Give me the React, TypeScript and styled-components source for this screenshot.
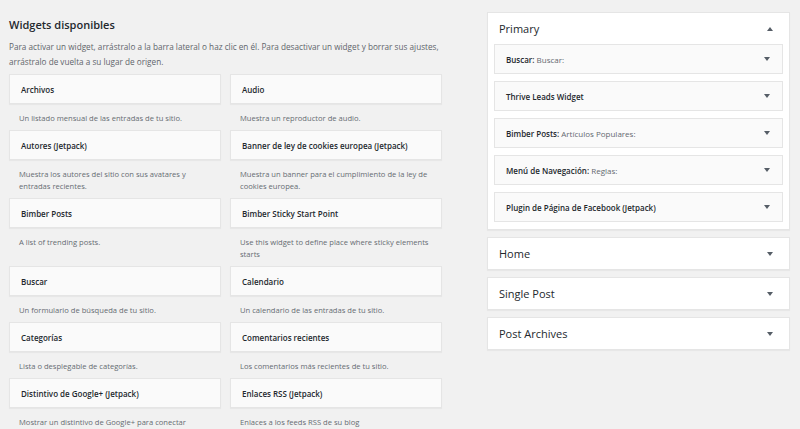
import React from 'react';
import styled, { createGlobalStyle } from 'styled-components';

const GlobalStyle = createGlobalStyle`
  html, body {
    margin: 0;
    padding: 0;
    background: #f1f1f1;
    font-family: "Open Sans", "Noto Sans", sans-serif;
    color: #23282d;
  }
`;

const Page = styled.div`
  display: flex;
  align-items: flex-start;
  width: 800px;
  height: 429px;
  overflow: hidden;
  padding-left: 9px;
  box-sizing: border-box;
`;

const Available = styled.div`
  width: 433px;
  flex-shrink: 0;
`;

const Heading = styled.h2`
  margin: 17px 0 0;
  font-size: 11px;
  line-height: 16px;
  font-weight: 600;
  color: #23282d;
`;

const Intro = styled.p`
  margin: 6px 0 0;
  font-size: 8.2px;
  line-height: 15px;
  color: #5f656b;
`;

const WidgetGrid = styled.div`
  display: grid;
  grid-template-columns: 212px 212px;
  column-gap: 9px;
  margin-top: 5px;
`;

const Widget = styled.div`
  display: flex;
  flex-direction: column;
`;

const WidgetTop = styled.div`
  height: 30px;
  box-sizing: border-box;
  display: flex;
  align-items: center;
  padding: 0 11px;
  background: #fafafa;
  border: 1px solid #e5e5e5;
  box-shadow: 0 1px 1px rgba(0, 0, 0, 0.04);
  font-size: 8px;
  font-weight: 600;
  color: #23282d;
  white-space: nowrap;
`;

const WidgetDescription = styled.div`
  padding: 8px 10px 6px;
  font-size: 7.6px;
  line-height: 12px;
  color: #666c72;
`;

const Sidebars = styled.div`
  display: flex;
  flex-direction: column;
  gap: 7px;
  width: 303px;
  margin-left: 45px;
  margin-top: 12px;
`;

const SidebarBox = styled.div`
  background: #fff;
  border: 1px solid #e5e5e5;
  box-shadow: 0 1px 1px rgba(0, 0, 0, 0.04);
`;

const SidebarHeader = styled.div`
  height: 31px;
  display: flex;
  align-items: center;
  justify-content: space-between;
  padding: 0 16px 0 11px;
  font-size: 11px;
  font-weight: 400;
  color: #23282d;
`;

const SidebarWidgets = styled.div`
  display: flex;
  flex-direction: column;
  gap: 7px;
  padding: 0 6px 7px;
`;

const SidebarWidget = styled.div`
  height: 30px;
  box-sizing: border-box;
  display: flex;
  align-items: center;
  justify-content: space-between;
  padding: 0 12px 0 11px;
  background: #fafafa;
  border: 1px solid #e5e5e5;
  font-size: 8px;
  font-weight: 600;
  color: #23282d;
  white-space: nowrap;
`;

const InTitle = styled.span`
  font-weight: 500;
  color: #646970;
`;

const Arrow = ({ up }: { up?: boolean }) => (
  <svg width="6" height="4" viewBox="0 0 6 4" style={{ flexShrink: 0 }}>
    {up ? <polygon points="0,4 6,4 3,0" fill="#555d66" /> : <polygon points="0,0 6,0 3,4" fill="#555d66" />}
  </svg>
);

const available: [string, string][] = [
  ['Archivos', 'Un listado mensual de las entradas de tu sitio.'],
  ['Audio', 'Muestra un reproductor de audio.'],
  ['Autores (Jetpack)', 'Muestra los autores del sitio con sus avatares y entradas recientes.'],
  ['Banner de ley de cookies europea (Jetpack)', 'Muestra un banner para el cumplimiento de la ley de cookies europea.'],
  ['Bimber Posts', 'A list of trending posts.'],
  ['Bimber Sticky Start Point', 'Use this widget to define place where sticky elements starts'],
  ['Buscar', 'Un formulario de búsqueda de tu sitio.'],
  ['Calendario', 'Un calendario de las entradas de tu sitio.'],
  ['Categorías', 'Lista o desplegable de categorías.'],
  ['Comentarios recientes', 'Los comentarios más recientes de tu sitio.'],
  ['Distintivo de Google+ (Jetpack)', 'Mostrar un distintivo de Google+ para conectar'],
  ['Enlaces RSS (Jetpack)', 'Enlaces a los feeds RSS de su blog'],
];

const primary: [string, string][] = [
  ['Buscar', 'Buscar:'],
  ['Thrive Leads Widget', ''],
  ['Bimber Posts', 'Artículos Populares:'],
  ['Menú de Navegación', 'Reglas:'],
  ['Plugin de Página de Facebook (Jetpack)', ''],
];

const closedSidebars = ['Home', 'Single Post', 'Post Archives'];

export default function App() {
  return (
    <>
      <GlobalStyle />
      <Page>
        <Available>
          <Heading>Widgets disponibles</Heading>
          <Intro>
            Para activar un widget, arrástralo a la barra lateral o haz clic en él. Para desactivar un widget y borrar sus ajustes,
            arrástralo de vuelta a su lugar de origen.
          </Intro>
          <WidgetGrid>
            {available.map(([title, desc]) => (
              <Widget key={title}>
                <WidgetTop>{title}</WidgetTop>
                <WidgetDescription>{desc}</WidgetDescription>
              </Widget>
            ))}
          </WidgetGrid>
        </Available>
        <Sidebars>
          <SidebarBox>
            <SidebarHeader>
              Primary
              <Arrow up />
            </SidebarHeader>
            <SidebarWidgets>
              {primary.map(([title, sub]) => (
                <SidebarWidget key={title}>
                  <span>
                    {sub ? `${title}: ` : title}
                    {sub && <InTitle>{sub}</InTitle>}
                  </span>
                  <Arrow />
                </SidebarWidget>
              ))}
            </SidebarWidgets>
          </SidebarBox>
          {closedSidebars.map((name) => (
            <SidebarBox key={name}>
              <SidebarHeader>
                {name}
                <Arrow />
              </SidebarHeader>
            </SidebarBox>
          ))}
        </Sidebars>
      </Page>
    </>
  );
}
